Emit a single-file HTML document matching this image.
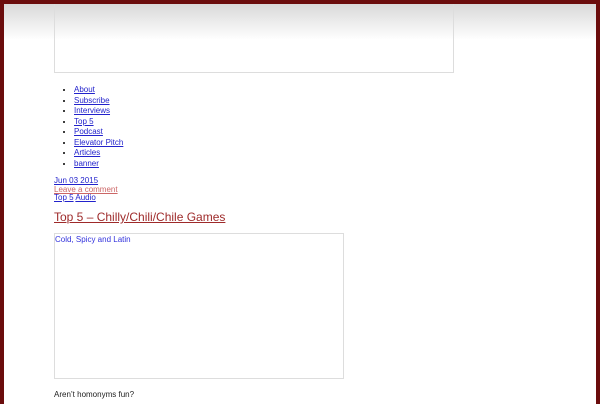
<!DOCTYPE html>
<html><head><style>
html,body{margin:0;padding:0;}
body{width:600px;height:400px;overflow:hidden;background:#6b0d0d;font-family:"Liberation Sans",sans-serif;position:relative}
.inner{position:absolute;left:4px;top:4px;width:592px;height:400px;background:linear-gradient(#d9d9d9 0px,#fff 36px,#fff 100%)}
.hdr{position:absolute;left:50px;top:0;width:398px;height:68px;border:1px solid #ddd;border-top:none;}
ul{position:absolute;left:60px;top:81px;margin:0;padding:0 0 0 10px;font-size:8px;line-height:10.5px;}
li{margin:0}
a{color:#2222cc;text-decoration:underline}
.meta{position:absolute;left:50px;top:173px;font-size:8px;line-height:8.5px}
.meta a.r{color:#c66}
.title{position:absolute;left:50px;top:206px;font-size:12px;color:#9e2a2a}
.title a{color:#9e2a2a}
.box{position:absolute;left:50px;top:229px;width:288px;height:144px;border:1px solid #ddd;font-size:8px;color:#3333dd;padding:0}
.box span{position:absolute;left:0;top:1px}
.p{position:absolute;left:50px;top:386px;font-size:8px;color:#222}
</style></head><body>
<div class="inner">
<div class="hdr"></div>
<ul>
<li><a>About</a></li><li><a>Subscribe</a></li><li><a>Interviews</a></li><li><a>Top 5</a></li><li><a>Podcast</a></li><li><a>Elevator Pitch</a></li><li><a>Articles</a></li><li><a>banner</a></li>
</ul>
<div class="meta"><a>Jun 03 2015</a><br><a class="r">Leave a comment</a><br><a>Top 5</a> <a>Audio</a></div>
<div class="title"><a>Top 5 – Chilly/Chili/Chile Games</a></div>
<div class="box"><span>Cold, Spicy and Latin</span></div>
<div class="p">Aren’t homonyms fun?</div>
</div>
</body></html>
